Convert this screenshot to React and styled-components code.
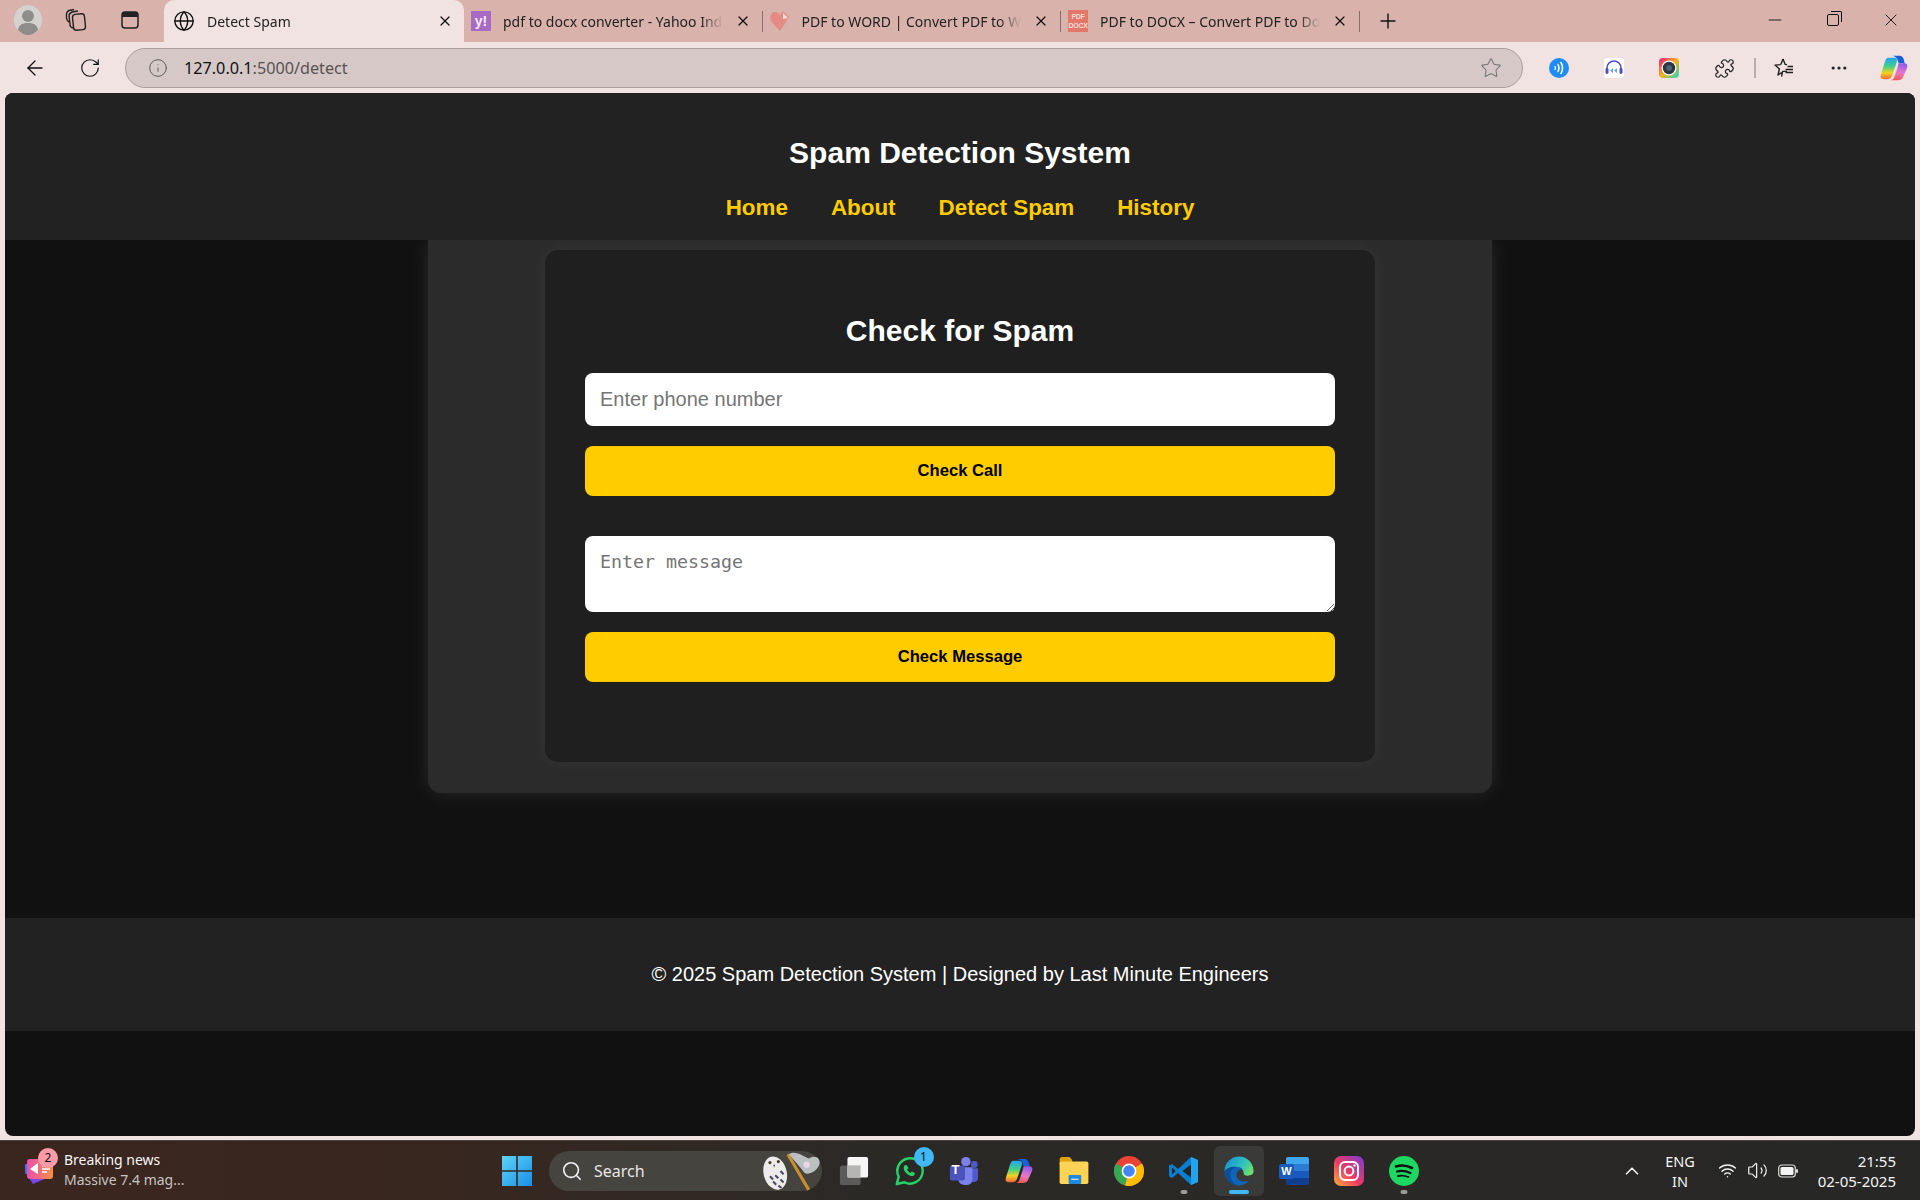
import styled, { createGlobalStyle } from 'styled-components'
import {
  ArrowLeft,
  ChevronUp,
  Ellipsis,
  Globe,
  Info,
  Minus,
  Plus,
  Puzzle,
  RotateCw,
  Search,
  Star,
  Volume2,
  Wifi,
  X,
} from 'lucide-react'

const GlobalStyle = createGlobalStyle`
  html, body {
    margin: 0;
    padding: 0;
    background: #f1e3e2;
  }
  * {
    box-sizing: border-box;
  }
`

const tabs = [
  { title: 'pdf to docx converter - Yahoo India', icon: 'yahoo' },
  { title: 'PDF to WORD | Convert PDF to Word', icon: 'heart' },
  { title: 'PDF to DOCX – Convert PDF to Doc', icon: 'pdf' },
]

const YahooIcon = () => <YahooBox>y!</YahooBox>

const HeartIcon = () => (
  <svg width="20" height="22" viewBox="0 0 20 22">
    <path d="M10 21 L1 11 C-1 7 1 2 5 2 C7 2 9 3 10 5 L13 1 L19 7 L14 15 Z" fill="#e58a84" />
    <path d="M13 3 L18 8 L13 9 Z" fill="#f7dcd8" />
  </svg>
)

const PdfIcon = () => (
  <PdfBox>
    <span>PDF</span>
    <span>DOCX</span>
  </PdfBox>
)

const favicons = { yahoo: <YahooIcon />, heart: <HeartIcon />, pdf: <PdfIcon /> }

const AvatarIcon = () => (
  <svg width="28" height="30" viewBox="0 0 28 30">
    <ellipse cx="14" cy="15" rx="14" ry="15" fill="#d4d2cf" />
    <circle cx="14" cy="11" r="6" fill="#8f8d8a" />
    <path d="M4 25 C5 19 9 18 14 18 C19 18 23 19 24 25 C21 28 18 30 14 30 C10 30 7 28 4 25 Z" fill="#8f8d8a" />
  </svg>
)

const WorkspacesIcon = () => (
  <svg width="22" height="24" viewBox="0 0 22 24" fill="none" stroke="#222" strokeWidth="1.4">
    <rect x="8" y="6" width="12" height="16" rx="3" transform="rotate(-6 14 14)" />
    <path d="M8 20 C5 19 5 18 5 16 L4 8 C4 6 5 5 7 4 L13 3" />
    <path d="M4 14 C2 13 2 12 1.5 10 L1.5 6 C1.5 4 3 3 4 2.5 L9 1.5" />
  </svg>
)

const VerticalTabsIcon = () => (
  <svg width="20" height="20" viewBox="0 0 20 20" fill="none">
    <rect x="2" y="2" width="16" height="16" rx="3" stroke="#222" strokeWidth="1.5" />
    <path d="M2 5 a3 3 0 0 1 3 -3 h10 a3 3 0 0 1 3 3 v2 h-16 z" fill="#222" />
  </svg>
)

const ReadAloudIcon = () => (
  <svg width="20" height="20" viewBox="0 0 20 20" fill="none" stroke="#fff" strokeLinecap="round">
    <circle cx="10" cy="10" r="10" fill="#1e8cf5" stroke="none" />
    <path d="M6 8.5 Q7 10 6 11.5" strokeWidth="1.3" />
    <path d="M9 6.5 Q11 10 9 13.5" strokeWidth="1.5" />
    <path d="M12 4.5 Q15 10 12 15.5" strokeWidth="1.6" />
  </svg>
)

const HeadsetIcon = () => (
  <svg width="20" height="20" viewBox="0 0 20 20" fill="none">
    <rect width="20" height="20" rx="3" fill="#fff" />
    <path d="M3 12 V10 a7 7 0 0 1 14 0 V12" stroke="#4a4fc9" strokeWidth="1.6" />
    <rect x="1.5" y="10" width="3" height="6" rx="1.4" fill="#4a4fc9" />
    <rect x="15.5" y="10" width="3" height="6" rx="1.4" fill="#4a4fc9" />
    <path d="M9 10 L6 12.5 L9 15 Z M13 10 L10 12.5 L13 15 Z" fill="#6aa8e8" />
  </svg>
)

const LensIcon = () => (
  <svg width="20" height="20" viewBox="0 0 20 20">
    <defs>
      <linearGradient id="lensRing" x1="0" y1="0" x2="1" y2="1">
        <stop offset="0" stopColor="#e8178a" />
        <stop offset="0.5" stopColor="#f5b21a" />
        <stop offset="1" stopColor="#1fd6c8" />
      </linearGradient>
    </defs>
    <rect width="20" height="20" rx="4" fill="url(#lensRing)" />
    <circle cx="10" cy="10" r="7.5" fill="#fff" />
    <circle cx="10" cy="10" r="6.2" fill="#2c3540" />
    <circle cx="10" cy="10" r="3" fill="#4d6070" />
  </svg>
)

const FavoritesIcon = () => (
  <svg width="22" height="22" viewBox="0 0 22 22" fill="none" stroke="#222" strokeWidth="1.4" strokeLinejoin="round">
    <path d="M10 2 L12.2 7.4 L14 7.6 M8.6 19.6 L9.6 14.4 L14 14.4 M7.8 7.6 L2 8.1 L6.4 12 L5 18 L8.6 15.6 M10 2 L7.8 7.6" />
    <path d="M14.5 9.5 H20 M12.5 12.5 H20 M12.5 15.5 H20" />
  </svg>
)

// two blades with a gap in the middle, gradient ids differ per instance
const CopilotIcon = ({ id, width = 28, height = 28 }) => (
  <svg width={width} height={height} viewBox="0 0 30 28">
    <defs>
      <linearGradient id={`${id}Left`} x1="0.4" y1="0" x2="0.4" y2="1">
        <stop offset="0" stopColor="#25a5f2" />
        <stop offset="0.4" stopColor="#3fd08a" />
        <stop offset="0.7" stopColor="#f2d41e" />
        <stop offset="1" stopColor="#f2673a" />
      </linearGradient>
      <linearGradient id={`${id}Right`} x1="0.6" y1="0" x2="0.4" y2="1">
        <stop offset="0" stopColor="#8f5ce8" />
        <stop offset="0.55" stopColor="#e878c8" />
        <stop offset="1" stopColor="#f0584f" />
      </linearGradient>
    </defs>
    <path d="M13 1 H21 C23.500 1 25 3 25.500 5 L26.500 9 H20 C19 5 17 1 13 1 Z" fill="#1b5fd8" />
    <path d="M9 3 H15 C18 3 18.500 5 18 7.500 L13 22 C12 25 10 26 8 26 H4 C1 26 0 24 1 21 L5 8 C6 5 7 3 9 3 Z" fill={`url(#${id}Left)`} />
    <path d="M20 9 H26 C29 9 30 11 29 14 L25 23 C24 26 22 27 19 27 H11 C14 27 15 25 16 22 L19 13 C19.500 11 19.500 10 20 9 Z" fill={`url(#${id}Right)`} />
  </svg>
)

const NewsIcon = () => (
  <svg width="30" height="32" viewBox="0 0 30 32">
    <defs>
      <linearGradient id="newsCard" x1="0" y1="0" x2="1" y2="0">
        <stop offset="0" stopColor="#e94fb0" />
        <stop offset="1" stopColor="#f59042" />
      </linearGradient>
    </defs>
    <path d="M4 24 L22 24 L8 30 Z" fill="#7a45e8" />
    <rect x="0" y="10" width="4" height="10" rx="1" fill="#3a78e8" />
    <rect x="2" y="5" width="26" height="20" rx="3" fill="url(#newsCard)" />
    <path d="M5 15 L13 9 V20 Z" fill="#fff" />
    <path d="M17 12 H25 M17 15 H25 M17 18 H22" stroke="#fff" strokeWidth="1.6" />
  </svg>
)

const WindowsIcon = () => (
  <svg width="30" height="30" viewBox="0 0 30 30">
    <defs>
      <linearGradient id="winLogo" x1="0" y1="0" x2="1" y2="1">
        <stop offset="0" stopColor="#5ed3fb" />
        <stop offset="1" stopColor="#1a8fe3" />
      </linearGradient>
    </defs>
    <path d="M0 0 H14.2 V14.2 H0 Z M15.8 0 H30 V14.2 H15.8 Z M0 15.8 H14.2 V30 H0 Z M15.8 15.8 H30 V30 H15.8 Z" fill="url(#winLogo)" />
  </svg>
)

const OwlIcon = () => (
  <svg width="60" height="42" viewBox="0 0 56 40">
    <path d="M24 4 L44 38" stroke="#c98d2b" strokeWidth="3" />
    <path d="M25 4 C32 0 38 6 44 8 C50 4 56 8 54 14 C52 20 44 24 40 22 C36 16 30 10 25 4 Z" fill="#b9c0bf" />
    <circle cx="42" cy="14" r="3" fill="#e6d6e6" />
    <ellipse cx="12" cy="22" rx="11" ry="16" transform="rotate(-14 12 22)" fill="#eeecea" />
    <path d="M12 24 L15 27 M17 20 L20 23 M10 30 L13 33 M17 28 L20 31 M7 25 L10 28 M15 34 L18 36" stroke="#4a4a66" strokeWidth="2" />
    <circle cx="7" cy="12" r="1.5" fill="#4b3a20" />
    <circle cx="15" cy="11" r="1.5" fill="#4b3a20" />
    <path d="M10 14 L12 14 L11 17 Z" fill="#55504a" />
  </svg>
)

const TaskViewIcon = () => (
  <svg width="30" height="30" viewBox="0 0 32 32">
    <rect x="1" y="10" width="22" height="21" rx="2" fill="#5c5b59" />
    <rect x="9" y="1" width="22" height="22" rx="2" fill="#f6f6f6" />
    <rect x="9" y="10" width="14" height="13" fill="#b5b5b3" />
  </svg>
)

const WhatsappIcon = () => (
  <svg width="30" height="32" viewBox="0 0 32 34" fill="none">
    <path d="M3 31 L5 23 A13.5 13.5 0 1 1 11 29 Z" stroke="#25d366" strokeWidth="2.6" strokeLinejoin="round" />
    <path d="M11 11 C10 13 10 16 13 19 C16 22 19 23 21 22 L22.5 19.5 L19 17.5 L17.5 19 C16 18.5 14.5 17 14 15.5 L15.5 14 L13.5 10.5 Z" fill="#25d366" />
  </svg>
)

const TeamsIcon = () => (
  <svg width="30" height="30" viewBox="0 0 32 32">
    <circle cx="18" cy="6" r="5" fill="#7b83eb" />
    <circle cx="27" cy="9" r="3.6" fill="#5059c9" />
    <path d="M22 13 H31 V23 C31 26 29 28 26.5 28 C24 28 22 26 22 23 Z" fill="#5059c9" />
    <path d="M10 12 H25 V25 C25 29 22 31 18 31 C14 31 10 29 10 25 Z" fill="#7b83eb" />
    <rect x="1" y="10" width="16" height="16" rx="2" fill="#4b53bc" />
  </svg>
)

const FolderIcon = () => (
  <svg width="30" height="27" viewBox="0 0 32 30">
    <path d="M0 3 C0 1 1 0 3 0 H11 L14 3 V8 H0 Z" fill="#e0a10f" />
    <rect x="0" y="5" width="32" height="25" rx="2" fill="#fcd354" />
    <rect x="10" y="20" width="14" height="10" rx="1.5" fill="#1f88d8" />
    <rect x="13" y="24" width="8" height="1.6" fill="#bfe2f8" />
  </svg>
)

const ChromeIcon = () => (
  <svg width="30" height="30" viewBox="0 0 30 30">
    <circle cx="15" cy="15" r="15" fill="#ea4335" />
    <path d="M15 15 L2 7.5 A15 15 0 0 0 11 29.5 Z" fill="#34a853" />
    <path d="M15 15 L28 7.5 A15 15 0 0 1 11 29.5 Z" fill="#fbbc05" />
    <circle cx="15" cy="15" r="7.4" fill="#fff" />
    <circle cx="15" cy="15" r="5.8" fill="#4285f4" />
  </svg>
)

const VscodeIcon = () => (
  <svg width="30" height="30" viewBox="0 0 30 30">
    <path d="M22 1 L29 4 V26 L22 29 L9 17 L3 22 L0 20.5 V9.5 L3 8 L9 13 Z" fill="#0a7fd0" />
    <path d="M22 1 L29 4 V26 L22 29 Z" fill="#22a3ee" />
    <path d="M22 8.5 V21.5 L13.5 15 Z M3 11.5 V18.5 L6.6 15 Z" fill="#262523" />
  </svg>
)

const EdgeIcon = () => (
  <svg width="30" height="30" viewBox="0 0 32 32">
    <defs>
      <linearGradient id="edgeTop" x1="0" y1="0.2" x2="1" y2="0.7">
        <stop offset="0" stopColor="#1790cf" />
        <stop offset="0.55" stopColor="#2bbfc0" />
        <stop offset="1" stopColor="#6fe06a" />
      </linearGradient>
    </defs>
    <path d="M0.500 16 A15.500 15.500 0 0 1 31.500 16 C31.500 19 29 21 25 21 C22 21 21 19.500 21 18 C21 15 18 12 14 12 C8 12 3 14 0.500 16 Z" fill="url(#edgeTop)" />
    <path d="M0.500 16 C3 13 8 11 13 11.500 C18 12 20 13.500 19 14 C15 14.500 12.500 17.500 13.500 21.500 C14.500 26 20 28.500 27 26.500 C24 30 20 31.500 16 31.500 C7.500 31.500 0.500 24.500 0.500 16 Z" fill="#0f65b8" />
    <path d="M0.500 16 C3 13 8 11 13 11.500 C8 13 5.500 18 7.500 24 C8.500 27 11 30 14 31.300 C6.500 30.500 0.500 24 0.500 16 Z" fill="#0b4f9a" />
  </svg>
)

const InstagramIcon = () => (
  <svg width="30" height="30" viewBox="0 0 30 30" fill="none">
    <defs>
      <linearGradient id="instaBg" x1="0" y1="1" x2="1" y2="0">
        <stop offset="0" stopColor="#fdb03a" />
        <stop offset="0.45" stopColor="#ee3a62" />
        <stop offset="1" stopColor="#7b3ad8" />
      </linearGradient>
    </defs>
    <rect width="30" height="30" rx="7" fill="url(#instaBg)" />
    <rect x="6" y="6" width="18" height="18" rx="5" stroke="#fff" strokeWidth="2" />
    <circle cx="15" cy="15" r="4.4" stroke="#fff" strokeWidth="2" />
    <circle cx="20.5" cy="9.5" r="1.2" fill="#fff" />
  </svg>
)

const SpotifyIcon = () => (
  <svg width="30" height="30" viewBox="0 0 30 30" fill="none" stroke="#111" strokeLinecap="round">
    <circle cx="15" cy="15" r="15" fill="#1ed760" stroke="none" />
    <path d="M7 10.5 C12 9 18 9.500 23 12" strokeWidth="2.6" />
    <path d="M8 15.500 C12 14.500 17 15 21.500 17" strokeWidth="2.2" />
    <path d="M9 20 C12.500 19.200 16 19.500 19.500 21" strokeWidth="1.8" />
  </svg>
)

const BatteryIcon = () => (
  <svg width="20" height="14" viewBox="0 0 20 14" fill="none">
    <rect x="0.7" y="1" width="16.600" height="12" rx="3" stroke="#ddd" strokeWidth="1.2" />
    <rect x="2.500" y="3" width="13" height="8" rx="1.500" fill="#f4f4f4" />
    <rect x="18" y="5" width="2" height="4" rx="1" fill="#ddd" />
  </svg>
)

const App = () => {
  return (
    <Screen>
      <GlobalStyle />
      <TabStrip>
        <StripTools>
          <AvatarIcon />
          <WorkspacesIcon />
          <VerticalSlot>
            <VerticalTabsIcon />
          </VerticalSlot>
        </StripTools>
        <Tab $active>
          <Globe size={22} strokeWidth={1.5} color="#111" />
          <TabTitle>Detect Spam</TabTitle>
          <X size={16} strokeWidth={1.8} color="#111" />
        </Tab>
        {tabs.map((tab) => (
          <Tab key={tab.title}>
            <Favicon>{favicons[tab.icon]}</Favicon>
            <TabTitle>{tab.title}</TabTitle>
            <X size={16} strokeWidth={1.8} color="#111" />
          </Tab>
        ))}
        <NewTab>
          <Plus size={24} strokeWidth={1.4} color="#111" />
        </NewTab>
        <WindowControls>
          <Minus size={20} strokeWidth={1.1} color="#111" />
          <RestoreBox />
          <X size={20} strokeWidth={1.1} color="#111" />
        </WindowControls>
      </TabStrip>

      <Toolbar>
        <NavTools>
          <ArrowLeft size={24} strokeWidth={1.3} color="#111" />
          <RotateCw size={22} strokeWidth={1.3} color="#111" />
        </NavTools>
        <AddressBar>
          <Info size={20} strokeWidth={1.1} color="#555" />
          <Url>
            127.0.0.1<UrlRest>:5000/detect</UrlRest>
          </Url>
          <Star size={22} strokeWidth={1.2} color="#777" />
        </AddressBar>
        <Extensions>
          <ExtensionSlot><ReadAloudIcon /></ExtensionSlot>
          <ExtensionSlot><HeadsetIcon /></ExtensionSlot>
          <ExtensionSlot><LensIcon /></ExtensionSlot>
          <ExtensionSlot><Puzzle size={21} strokeWidth={1.4} color="#222" /></ExtensionSlot>
          <ToolDivider />
          <ExtensionSlot><FavoritesIcon /></ExtensionSlot>
          <ExtensionSlot><Ellipsis size={20} strokeWidth={1.8} color="#222" /></ExtensionSlot>
          <ExtensionSlot><CopilotIcon id="copilotBar" /></ExtensionSlot>
        </Extensions>
      </Toolbar>

      <Page>
        <Header>
          <SiteTitle>Spam Detection System</SiteTitle>
          <Nav>
            <NavLink href="#">Home</NavLink>
            <NavLink href="#">About</NavLink>
            <NavLink href="#">Detect Spam</NavLink>
            <NavLink href="#">History</NavLink>
          </Nav>
        </Header>
        <Main>
          <Panel>
            <Card>
              <CardTitle>Check for Spam</CardTitle>
              <PhoneInput placeholder="Enter phone number" />
              <Button>Check Call</Button>
              <MessageInput placeholder="Enter message" />
              <Button>Check Message</Button>
            </Card>
          </Panel>
        </Main>
        <Footer>© 2025 Spam Detection System | Designed by Last Minute Engineers</Footer>
      </Page>

      <Taskbar>
        <News>
          <NewsBadgeWrap>
            <NewsIcon />
            <Badge $bg="#ff9aa8" $top="-6px" $right="-3px" $size="20px">2</Badge>
          </NewsBadgeWrap>
          <NewsText>
            <NewsTitle>Breaking news</NewsTitle>
            <NewsSub>Massive 7.4 mag...</NewsSub>
          </NewsText>
        </News>
        <Center>
          <WindowsIcon />
          <SearchBox>
            <Search size={22} strokeWidth={1.8} color="#f2f2f2" />
            <SearchLabel>Search</SearchLabel>
            <OwlIcon />
          </SearchBox>
          <AppSlot><TaskViewIcon /></AppSlot>
          <AppSlot>
            <WhatsappIcon />
            <Badge $bg="#3fb8f5" $top="1px" $right="0" $size="20px">1</Badge>
          </AppSlot>
          <AppSlot>
            <TeamsIcon />
            <TeamsLetter>T</TeamsLetter>
          </AppSlot>
          <AppSlot><CopilotIcon id="copilotTask" width={30} height={26} /></AppSlot>
          <AppSlot><FolderIcon /></AppSlot>
          <AppSlot><ChromeIcon /></AppSlot>
          <AppSlot $running><VscodeIcon /></AppSlot>
          <AppSlot $active><EdgeIcon /></AppSlot>
          <AppSlot>
            <WordBlock>
              <WordBadge>W</WordBadge>
            </WordBlock>
          </AppSlot>
          <AppSlot><InstagramIcon /></AppSlot>
          <AppSlot $running><SpotifyIcon /></AppSlot>
        </Center>
        <Tray>
          <ChevronUp size={22} strokeWidth={1.8} color="#f2f2f2" />
          <Lang>
            <span>ENG</span>
            <span>IN</span>
          </Lang>
          <TrayIcons>
            <Wifi size={19} strokeWidth={1.8} color="#f2f2f2" />
            <Volume2 size={21} strokeWidth={1.4} color="#f2f2f2" />
            <BatteryIcon />
          </TrayIcons>
          <Clock>
            <span>21:55</span>
            <span>02-05-2025</span>
          </Clock>
        </Tray>
      </Taskbar>
    </Screen>
  )
}

const chromeFont = `"Noto Sans", "Open Sans", sans-serif`
const pageFont = `"Liberation Sans", Arial, sans-serif`

const Screen = styled.div`
  width: 1920px;
  height: 1200px;
  display: flex;
  flex-direction: column;
  overflow: hidden;
  background: #f1e3e2;
  font-family: ${chromeFont};
`

const TabStrip = styled.div`
  height: 42px;
  display: flex;
  align-items: stretch;
  background: #d8b2ab;
`

const StripTools = styled.div`
  width: 164px;
  display: flex;
  align-items: center;
  gap: 23px;
  padding: 0 0 2px 14px;
`

const VerticalSlot = styled.div`
  display: flex;
  margin-left: 10px;
`

const Tab = styled.div`
  width: ${(p) => (p.$active ? '300px' : '298.5px')};
  display: flex;
  align-items: center;
  gap: 12px;
  padding: 0 ${(p) => (p.$active ? '11px' : '12px')} 0 ${(p) => (p.$active ? '9px' : '7px')};
  background: ${(p) => (p.$active ? '#f1e3e2' : 'transparent')};
  border-radius: ${(p) => (p.$active ? '10px 10px 0 0' : '0')};
  position: relative;

  &::after {
    content: '';
    display: ${(p) => (p.$active ? 'none' : 'block')};
    position: absolute;
    right: 0;
    top: 11px;
    bottom: 10px;
    width: 1px;
    background: #85706c;
  }
`

const TabTitle = styled.div`
  flex: 1;
  min-width: 0;
  font-size: 14px;
  color: #222;
  white-space: nowrap;
  overflow: hidden;
  -webkit-mask-image: linear-gradient(to right, #000 90%, transparent 100%);
  mask-image: linear-gradient(to right, #000 90%, transparent 100%);
`

const Favicon = styled.div`
  width: 20px;
  height: 22px;
  flex: none;
  display: flex;
  align-items: center;
  justify-content: center;
`

const YahooBox = styled.div`
  width: 20px;
  height: 20px;
  background: #a86bc4;
  color: #f4e9f5;
  font: bold 14px ${pageFont};
  display: flex;
  align-items: center;
  justify-content: center;
`

const PdfBox = styled.div`
  width: 20px;
  height: 22px;
  background: #e2786a;
  color: #f8dcd6;
  font: bold 7px/9px ${pageFont};
  display: flex;
  flex-direction: column;
  align-items: center;
  justify-content: center;
  overflow: hidden;
  letter-spacing: -0.3px;
`

const NewTab = styled.div`
  width: 56px;
  display: flex;
  align-items: center;
  justify-content: center;
`

const WindowControls = styled.div`
  margin-left: auto;
  display: flex;
  align-items: center;
  gap: 42px;
  padding: 0 19px 3px 0;
`

const RestoreBox = styled.div`
  width: 12px;
  height: 12px;
  border: 1.2px solid #111;
  border-radius: 2px;
  position: relative;

  &::before {
    content: '';
    position: absolute;
    top: -3.5px;
    right: -3.500px;
    width: 10px;
    height: 10px;
    border-top: 1.2px solid #111;
    border-right: 1.2px solid #111;
    border-radius: 0 2px 0 0;
  }
`

const Toolbar = styled.div`
  height: 51px;
  display: flex;
  align-items: center;
  padding-top: 1px;
  background: #f1e3e2;
`

const NavTools = styled.div`
  width: 125px;
  flex: none;
  display: flex;
  align-items: center;
  gap: 32px;
  padding-left: 23px;
`

const AddressBar = styled.div`
  width: 1398px;
  height: 40px;
  flex: none;
  display: flex;
  align-items: center;
  padding: 0 20px 0 22px;
  background: #d5c8c7;
  border: 1px solid #ab9f9e;
  border-radius: 20px;
`

const Url = styled.div`
  flex: 1;
  margin-left: 16px;
  font-size: 16.2px;
  color: #111;
`

const UrlRest = styled.span`
  color: #5a5352;
`

const Extensions = styled.div`
  flex: none;
  display: flex;
  align-items: center;
  padding-left: 8.5px;
`

const ExtensionSlot = styled.div`
  width: 55px;
  flex: none;
  display: flex;
  align-items: center;
  justify-content: center;
`

const ToolDivider = styled.div`
  width: 2px;
  height: 20px;
  margin: 0 1px 0 2px;
  background: #b9acab;
`

const Page = styled.div`
  height: 1043px;
  margin: 0 5px;
  display: flex;
  flex-direction: column;
  background: #111;
  border-radius: 8px;
  overflow: hidden;
  font-family: ${pageFont};
`

const Header = styled.header`
  height: 147px;
  flex: none;
  position: relative;
  z-index: 1;
  display: flex;
  flex-direction: column;
  align-items: center;
  padding-top: 41px;
  background: #222;
`

const SiteTitle = styled.h1`
  margin: 0;
  font-size: 30px;
  line-height: 38px;
  font-weight: 700;
  color: #fff;
`

const Nav = styled.nav`
  display: flex;
  gap: 43px;
  margin-top: 23px;
`

const NavLink = styled.a`
  font-size: 22.4px;
  line-height: 26px;
  font-weight: 700;
  color: #ffcc00;
  text-decoration: none;
`

const Main = styled.main`
  flex: 1;
  display: flex;
  justify-content: center;
  align-items: flex-start;
`

const Panel = styled.section`
  width: 1064px;
  height: 553px;
  padding-top: 10px;
  display: flex;
  justify-content: center;
  background: #2b2b2b;
  border-radius: 0 0 13px 13px;
  box-shadow: 0 0 20px rgba(255, 255, 255, 0.1);
`

const Card = styled.div`
  width: 830px;
  height: 512px;
  padding: 64px 40px 0;
  display: flex;
  flex-direction: column;
  background: #1f1f1f;
  border-radius: 13px;
  box-shadow: 0 0 15px rgba(255, 255, 255, 0.06);
`

const CardTitle = styled.h2`
  margin: 0 0 25px;
  font-size: 30px;
  line-height: 34px;
  font-weight: 700;
  text-align: center;
  color: #fff;
`

const PhoneInput = styled.input`
  height: 53px;
  flex: none;
  padding: 0 15px;
  border: none;
  border-radius: 8px;
  background: #fff;
  font: 20px ${pageFont};
  outline: none;

  &::placeholder {
    color: #757575;
  }
`

const MessageInput = styled.textarea`
  height: 76px;
  flex: none;
  margin-top: 40px;
  padding: 15px;
  border: none;
  border-radius: 8px;
  background: #fff;
  font: 18.3px/22px "DejaVu Sans Mono", "Liberation Mono", monospace;
  outline: none;
  resize: vertical;

  &::placeholder {
    color: #757575;
  }
`

const Button = styled.button`
  height: 50px;
  flex: none;
  margin-top: 20px;
  border: none;
  border-radius: 8px;
  background: #ffcc00;
  color: #000;
  font: bold 16.6px ${pageFont};
`

const Footer = styled.footer`
  height: 113px;
  flex: none;
  margin-bottom: 105px;
  display: flex;
  align-items: center;
  justify-content: center;
  background: #222;
  color: #fff;
  font-size: 20px;
`

const Taskbar = styled.div`
  height: 60px;
  margin-top: 4px;
  display: flex;
  align-items: center;
  position: relative;
  background: linear-gradient(to right, #3b261f 0, #38271f 22%, #2b2926 45%, #272725 100%);
  border-top: 1px solid #4a4340;
  color: #f4f4f4;
`

const News = styled.div`
  width: 502px;
  display: flex;
  align-items: center;
  gap: 9px;
  padding: 0 0 2px 25px;
`

const NewsBadgeWrap = styled.div`
  position: relative;
  width: 30px;
  height: 32px;
`

const Badge = styled.div`
  position: absolute;
  top: ${(p) => p.$top};
  right: ${(p) => p.$right};
  width: ${(p) => p.$size};
  height: ${(p) => p.$size};
  border-radius: 50%;
  background: ${(p) => p.$bg};
  color: #111;
  font-size: 12px;
  display: flex;
  align-items: center;
  justify-content: center;
`

const NewsText = styled.div`
  display: flex;
  flex-direction: column;
  font-size: 14px;
  line-height: 20px;
`

const NewsTitle = styled.div`
  color: #f6f6f6;
`

const NewsSub = styled.div`
  color: #c9c3c0;
`

const Center = styled.div`
  display: flex;
  align-items: center;
`

const SearchBox = styled.div`
  width: 273px;
  height: 40px;
  margin: 0 4px 0 17px;
  display: flex;
  align-items: center;
  padding: 0 0 0 12px;
  background: #46443f;
  border-radius: 20px;
`

const SearchLabel = styled.span`
  flex: 1;
  margin-left: 11px;
  font-size: 16px;
  color: #e6e6e6;
`

const AppSlot = styled.div`
  width: 50px;
  height: 50px;
  margin: 0 2.5px;
  position: relative;
  display: flex;
  align-items: center;
  justify-content: center;
  border-radius: 6px;
  background: ${(p) => (p.$active ? '#3a3a38' : 'transparent')};

  &::after {
    content: '';
    display: ${(p) => (p.$active || p.$running ? 'block' : 'none')};
    position: absolute;
    bottom: 2px;
    left: 50%;
    transform: translateX(-50%);
    width: ${(p) => (p.$active ? '20px' : '7px')};
    height: 4px;
    border-radius: 2px;
    background: ${(p) => (p.$active ? '#3fb8f5' : '#9a9a98')};
  }
`

const TeamsLetter = styled.span`
  position: absolute;
  left: 13px;
  top: 16px;
  color: #fff;
  font: bold 13px ${pageFont};
`

const WordBlock = styled.div`
  width: 23px;
  height: 28px;
  margin-left: 8px;
  position: relative;
  border-radius: 2px;
  background: linear-gradient(to bottom, #41a5ee 0 25%, #2b7cd3 25% 50%, #185abd 50% 75%, #103f91 75% 100%);
`

const WordBadge = styled.div`
  position: absolute;
  left: -7px;
  top: 7px;
  width: 15px;
  height: 15px;
  border-radius: 2px;
  background: #185abd;
  color: #fff;
  font: bold 11px ${pageFont};
  display: flex;
  align-items: center;
  justify-content: center;
`

const Tray = styled.div`
  flex: 1;
  display: flex;
  align-items: center;
  justify-content: flex-end;
  padding-right: 24px;
  font-size: 14.5px;
`

const Lang = styled.div`
  width: 42px;
  margin-left: 16px;
  display: flex;
  flex-direction: column;
  align-items: center;
  line-height: 20px;
`

const TrayIcons = styled.div`
  display: flex;
  align-items: center;
  gap: 10px;
  margin-left: 17px;
`

const Clock = styled.div`
  width: 98px;
  display: flex;
  flex-direction: column;
  align-items: flex-end;
  font-size: 15px;
  line-height: 20px;
`

export default App
